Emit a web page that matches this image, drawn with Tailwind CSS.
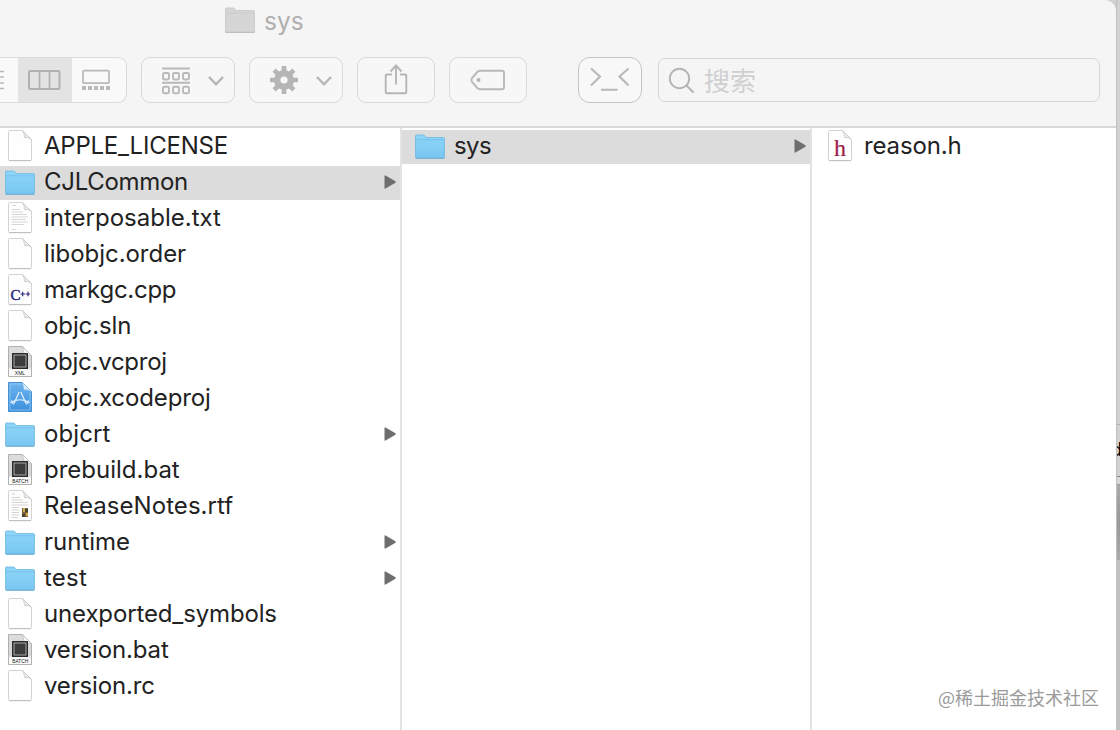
<!DOCTYPE html>
<html lang="zh-CN">
<head>
    <meta charset="UTF-8">
    <meta name="viewport" content="width=device-width, initial-scale=1.0">
    <title>sys</title>
    <script src="https://cdn.jsdelivr.net/npm/@tailwindcss/browser@4"></script>
</head>
<body class="w-[1120px] h-[730px] overflow-hidden flex bg-[#d2d2d2] font-['Inter','Noto_Sans_CJK_SC',sans-serif]">
    <!-- Shared icons -->
    <svg class="absolute w-0 h-0">
        <defs>
            <linearGradient id="blue" x1="0" y1="0" x2="0" y2="1">
                <stop offset="0" stop-color="#8fd6f8"/><stop offset="1" stop-color="#78c6f0"/>
            </linearGradient>
            <linearGradient id="xcode" x1="0" y1="0" x2="0" y2="1">
                <stop offset="0" stop-color="#6cb4ee"/><stop offset="1" stop-color="#3d8fdd"/>
            </linearGradient>
            <linearGradient id="metal" x1="0" y1="0" x2="0" y2="1">
                <stop offset="0" stop-color="#dcdcdc"/><stop offset="0.7" stop-color="#d6d6d6"/><stop offset="0.78" stop-color="#fafafa"/>
            </linearGradient>
        </defs>
        <symbol id="page" viewBox="0 0 32 34">
            <path d="M4.500 1.500Q4.500 .5 5.500 .5H18.500L27.500 9.500V29.500Q27.500 30.500 26.500 30.500H5.500Q4.500 30.500 4.500 29.500Z" fill="#fefefe" stroke="#d2d2d2"/>
            <path d="M5 30.700H27" stroke="#bdbdbd"/>
            <path d="M18.500 .5L27.500 9.500Q24 6.500 20.500 7.500Q20.500 3.500 18.500 .5Z" fill="#ececec" stroke="#c8c8c8" stroke-width=".8"/>
        </symbol>
        <symbol id="folder" viewBox="0 0 32 34">
            <path d="M1.500 6Q1.500 5 2.500 5H9.500Q10.500 5 11 6L12 7.500H29.500Q30.500 7.500 30.500 8.500V27Q30.500 28 29.500 28H2.500Q1.500 28 1.500 27Z" fill="url(#blue)" stroke="#73bbe2" stroke-width=".9"/>
            <path d="M2 9.800H30" stroke="#6fbfea" stroke-width=".9"/>
            <path d="M1.500 28.300H30.500" stroke="#6aa9cc" stroke-width=".9"/>
        </symbol>
        <symbol id="text" viewBox="0 0 32 34">
            <use href="#page"/>
            <path d="M8 3.500H12M7.500 7.500H16M7.500 10H19M7.500 12.500H23M7.500 15H24M7.500 17.500H22M7.500 20H24M7.500 22.500H20M7.500 27.500H12" stroke="#cdcdcd" stroke-width=".8"/>
        </symbol>
        <symbol id="rtf" viewBox="0 0 32 34">
            <use href="#page"/>
            <path d="M8 4H11M7.500 7.500H16M7.500 10H19M7.500 12.500H24M7.500 15H24M7.500 17.500H15M7.500 20H15M7.500 22.500H15M7.500 25H15M7.500 27.500H14" stroke="#cdc9c4" stroke-width=".8"/>
            <rect x="18" y="18" width="6" height="9" fill="#7c6337"/>
            <path d="M19 18h2v4h-2zM22 23h2v3h-2z" fill="#d2ab55"/>
            <path d="M21 19h3v3h-3zM18 24h3v3h-3z" fill="#4a4436"/>
        </symbol>
        <symbol id="cpp" viewBox="0 0 32 34">
            <use href="#page"/>
            <path d="M16.500 20H21M18.700 17.700V22.300M21.700 20H26.200M24 17.700V22.300" stroke="#2f2a80" stroke-width="1.200"/>
        </symbol>
        <symbol id="exec" viewBox="0 0 32 34">
            <path d="M4.500 .5H18.500L27.500 9.500V30.500H4.500Z" fill="url(#metal)" stroke="#a9a9a9" stroke-width=".9"/>
            <path d="M18.500 .5L27.500 9.500L20 8Z" fill="#f4f4f4" stroke="#bbb" stroke-width=".7"/>
            <rect x="8" y="7" width="16" height="16" fill="#2c2c2c"/>
            <rect x="10" y="9" width="12" height="12" fill="#3c3c3c" stroke="#b4b4b4" stroke-width=".9"/>
        </symbol>
        <symbol id="proj" viewBox="0 0 32 34">
            <path d="M4.500 .5H18.500L27.500 9.500V29.500H4.500Z" fill="url(#xcode)" stroke="#4791d3"/>
            <path d="M6 2H18M6 2V28H26V10" fill="none" stroke="#9fd0f5" stroke-width=".7"/>
            <path d="M18.500 .5L27.500 9.500Q23 7 20 8Z" fill="#dceefb" stroke="#8abfe9" stroke-width=".6"/>
            <path d="M15.200 10L10 21.500M16.800 10L22 21.500M6.500 20.500Q16 15 25.500 20.500M7.500 18.500L9.500 22.500M24.500 18.500L22.500 22.500" fill="none" stroke="#e4f3ff" stroke-width="1.200"/>
        </symbol>
        <symbol id="chev" viewBox="0 0 16 10">
            <path d="M1 1L8 8.300L15 1" fill="none" stroke="#b6b6b6" stroke-width="2.400"/>
        </symbol>
    </svg>

    <div class="w-[1116px] h-[730px] shrink-0 flex flex-col bg-white rounded-tr-[12px] overflow-hidden">
        <!-- Title and toolbar -->
        <header class="h-32 shrink-0 bg-[#f5f5f5] border-b-2 border-[#d8d8d8]">
            <div class="h-[57px] pl-[224px] flex">
                <svg class="w-8 h-[34px] mt-[3px]" viewBox="0 0 32 34">
                    <path d="M1.500 6Q1.500 5 2.500 5H9.500Q10.500 5 11 6L12 7.500H29.500Q30.500 7.500 30.500 8.500V28.500Q30.500 29.500 29.500 29.500H2.500Q1.500 29.500 1.500 28.500Z" fill="#d6d6d6" stroke="#cacaca" stroke-width=".9"/>
                    <path d="M2 10H30" stroke="#c9c9c9"/>
                    <path d="M1.500 29.300H30.500" stroke="#bbb"/>
                </svg>
                <span class="ml-2 mt-[5px] text-[24.500px] leading-8 text-[#b0b0b0]">sys</span>
            </div>
            <div class="flex h-[46px]">
                <div class="w-[127px] flex rounded-r-[9px] border border-l-0 border-[#d9d9d9] bg-[#f9f9f9] overflow-hidden">
                    <svg class="w-[18px] h-11" viewBox="0 0 18 44"><path d="M0 13.500H4M0 19H4M0 25H4M0 30.500H4" stroke="#b9b9b9" stroke-width="1.500"/></svg>
                    <svg class="w-[54px] h-11 bg-[#e3e3e3]" viewBox="0 0 54 44">
                        <rect x="11" y="13" width="30.500" height="18" rx="1.500" fill="none" stroke="#b0b0b0" stroke-width="2"/>
                        <path d="M21.500 13V31M31.500 13V31" stroke="#b0b0b0" stroke-width="1.700"/>
                    </svg>
                    <svg class="w-[54px] h-11" viewBox="0 0 54 44">
                        <rect x="11" y="12.700" width="26" height="12.500" rx="1" fill="none" stroke="#b9b9b9" stroke-width="1.700"/>
                        <path d="M10 30H38" stroke="#b9b9b9" stroke-width="4" stroke-dasharray="4 2"/>
                    </svg>
                </div>
                <div class="ml-[14px] w-[94px] flex items-center rounded-[9px] border border-[#d9d9d9] bg-[#f7f7f7]">
                    <svg class="ml-5 w-7 h-11" viewBox="0 0 28 44" fill="none" stroke="#b9b9b9" stroke-width="1.900">
                        <path d="M0 10.500H28M0 24.700H28"/>
                        <rect x="1" y="15" width="6" height="6.500" rx="1.500"/><rect x="11" y="15" width="6" height="6.500" rx="1.500"/><rect x="21" y="15" width="6" height="6.500" rx="1.500"/>
                        <rect x="1" y="28.700" width="6" height="6.500" rx="1.500"/><rect x="11" y="28.700" width="6" height="6.500" rx="1.500"/><rect x="21" y="28.700" width="6" height="6.500" rx="1.500"/>
                    </svg>
                    <svg class="ml-[18px] w-4 h-[10px] mt-px"><use href="#chev"/></svg>
                </div>
                <div class="ml-[14px] w-[94px] flex items-center rounded-[9px] border border-[#d9d9d9] bg-[#f7f7f7]">
                    <svg class="ml-5 w-7 h-7" viewBox="-14 -14 28 28" stroke="#b5b5b5">
                        <circle r="6.800" fill="none" stroke-width="6.400"/>
                        <path d="M0 -14V-8M0 14V8M-14 0H-8M14 0H8M-9.900 -9.900L-6 -6M9.900 9.900L6 6M-9.900 9.900L-6 6M9.900 -9.900L6 -6" stroke-width="4.600"/>
                    </svg>
                    <svg class="ml-[18px] w-4 h-[10px] mt-px"><use href="#chev"/></svg>
                </div>
                <div class="ml-[14px] w-[78px] flex rounded-[9px] border border-[#d9d9d9] bg-[#f7f7f7]">
                    <svg class="w-[76px] h-11" viewBox="0 0 76 44" fill="none" stroke="#b6b6b6" stroke-width="1.900">
                        <path d="M34 16.500H28.500Q27.700 16.500 27.700 17.300V34.500Q27.700 35.300 28.500 35.300H47.500Q48.300 35.300 48.300 34.500V17.300Q48.300 16.500 47.500 16.500H42"/>
                        <path d="M38 26.500V8M32.500 13.500L38 7.500L43.500 13.500"/>
                    </svg>
                </div>
                <div class="ml-[14px] w-[78px] flex rounded-[9px] border border-[#d9d9d9] bg-[#f7f7f7]">
                    <svg class="w-[76px] h-11" viewBox="0 0 76 44">
                        <path d="M30 12.800H52Q54 12.800 54 14.800V29.200Q54 31.200 52 31.200H30Q28.500 31.200 27.300 30L22 24Q20.800 22 22 20L27.300 14Q28.500 12.800 30 12.800Z" fill="none" stroke="#b9b9b9" stroke-width="1.900"/>
                        <circle cx="28.500" cy="22" r="2" fill="#b5b5b5"/>
                    </svg>
                </div>
                <div class="ml-[51px] w-16 flex rounded-[12px] border border-[#c4c4c4] bg-[#f8f8f8]">
                    <svg class="w-[62px] h-11" viewBox="0 0 62 44" fill="none" stroke="#b8b8b8" stroke-width="2.100">
                        <path d="M12 10.500L21 18.500L12 27.500M49.500 10.500L40.500 18.500L49.500 27.500M22 31.800H38.500"/>
                    </svg>
                </div>
                <div class="ml-4 mt-px w-[442px] h-11 flex items-center rounded-[7px] border border-[#d6d6d6]">
                    <svg class="ml-[9px] w-7 h-7" viewBox="0 0 28 28" fill="none" stroke="#b4b4b4" stroke-width="1.900">
                        <circle cx="11.500" cy="12.500" r="9.700"/><path d="M18.500 19.500L25.500 26.500"/>
                    </svg>
                    <span class="ml-[8px] text-[26px] leading-8 text-[#d0d0d0] font-['Noto_Sans_CJK_SC',sans-serif]">搜索</span>
                </div>
            </div>
        </header>

        <!-- Columns -->
        <main class="flex-1 flex min-h-0">
            <ul id="col-files" class="w-[402px] pt-0.5 flex flex-col gap-0.5 border-r-2 border-[#e3e3e3]"></ul>
            <ul id="col-common" class="w-[410px] pt-0.5 flex flex-col gap-0.5 border-r-2 border-[#e3e3e3]"></ul>
            <ul id="col-sys" class="flex-1 pt-0.5 flex flex-col gap-0.5"></ul>
        </main>
    </div>

    <!-- Sliver of the window behind -->
    <div class="w-1 h-full shrink-0 flex flex-col bg-[#d2d2d2] border-l border-[#c0c0c0] overflow-hidden">
        <div class="h-[425px] border-b border-[#b0b0b0]"></div>
        <div class="h-[52px] pt-[11px] border-b border-[#888] text-[18px] leading-7 text-black"><span class="-ml-1.5">d</span></div>
        <div class="h-2 bg-[#d8d8d8] border-b border-[#999]"></div>
        <div class="h-[75px] bg-linear-to-b from-[#aaa] via-[#989898] to-[#aaa]"></div>
        <div class="flex-1 bg-[#c2c2c2]"></div>
    </div>

    <div class="absolute left-[938px] top-[685px] text-[18px] leading-6 whitespace-nowrap text-[#9a9a9a] font-['Noto_Sans_CJK_SC',sans-serif]">@稀土掘金技术社区</div>

    <script>
        // [name, icon, letter spacing in px, has children, selected]
        const files = [
            ['APPLE_LICENSE', 'page', -0.23],
            ['CJLCommon', 'folder', -0.3, true, true],
            ['interposable.txt', 'text', 0],
            ['libobjc.order', 'page', -0.04],
            ['markgc.cpp', 'cpp', -0.27],
            ['objc.sln', 'page', -0.1],
            ['objc.vcproj', 'xml', -0.27],
            ['objc.xcodeproj', 'proj', -0.12],
            ['objcrt', 'folder', 0.1, true],
            ['prebuild.bat', 'batch', 0],
            ['ReleaseNotes.rtf', 'rtf', 0.05],
            ['runtime', 'folder', 0, true],
            ['test', 'folder', 0.2, true],
            ['unexported_symbols', 'page', -0.14],
            ['version.bat', 'batch', -0.15],
            ['version.rc', 'page', -0.15]
        ];

        // Icons that carry lettering on top of a shared shape
        const lettered = {
            cpp: '<use href="#cpp"/><text x="6.500" y="25.500" font-family="Liberation Serif" font-size="15" fill="#2f2a80" stroke="#2f2a80" stroke-width=".5">C</text>',
            hdr: '<use href="#page"/><text x="10" y="26" font-family="Liberation Serif" font-size="24" fill="#a01c48" stroke="#a01c48" stroke-width=".2">h</text>',
            xml: '<use href="#exec"/><text x="16" y="28.800" text-anchor="middle" font-family="Liberation Sans" font-size="5" fill="#222">XML</text>',
            batch: '<use href="#exec"/><text x="16.200" y="28.800" text-anchor="middle" font-family="Liberation Sans" font-size="4.800" fill="#222">BATCH</text>'
        };

        function fillColumn(id, items, pad) {
            document.getElementById(id).innerHTML = items.map(([name, icon, spacing, arrow, selected]) => `
                <li class="h-[34px] flex items-center pr-1 ${pad} ${selected ? 'bg-[#dcdcdc]' : ''}">
                    <svg class="w-8 h-[34px] shrink-0" viewBox="0 0 32 34">${lettered[icon] || `<use href="#${icon}"/>`}</svg>
                    <span class="ml-2 flex-1 -mt-0.5 text-[24px] leading-8 whitespace-nowrap text-[#222]" style="letter-spacing:${spacing}px">${name}</span>
                    ${arrow ? '<svg class="w-3 h-[14px] mb-0.5" viewBox="0 0 12 14"><path d="M.5 1Q.5 0 1.500 .4L11.500 6.300Q12 7 11.500 7.700L1.500 13.600Q.5 14 .5 13Z" fill="#6e6e6e"/></svg>' : ''}
                </li>`).join('');
        }

        fillColumn('col-files', files, 'pl-1');
        fillColumn('col-common', [['sys', 'folder', -0.6, true, true]], 'pl-3');
        fillColumn('col-sys', [['reason.h', 'hdr', -0.15]], 'pl-3');
    </script>
</body>
</html>
